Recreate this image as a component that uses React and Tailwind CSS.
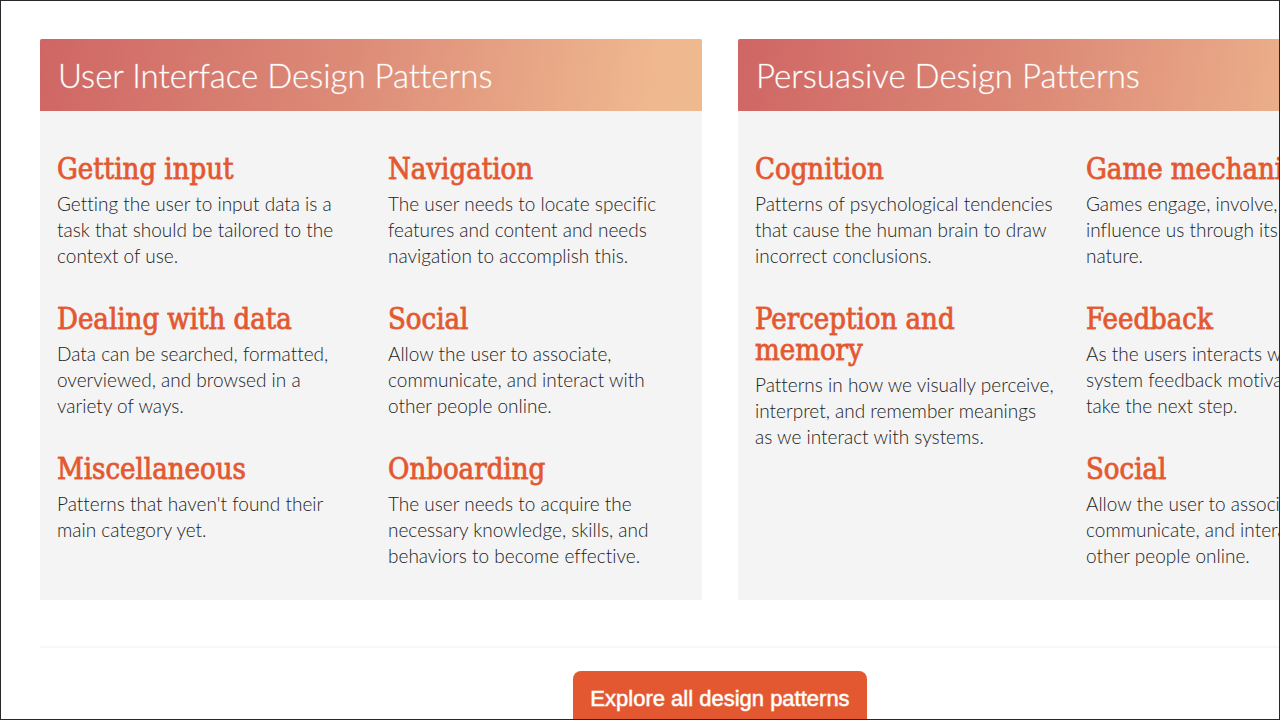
const groups = [
  {
    title: 'User Interface Design Patterns',
    columns: [
      [
        { name: 'Getting input', text: 'Getting the user to input data is a task that should be tailored to the context of use.' },
        { name: 'Dealing with data', text: 'Data can be searched, formatted, overviewed, and browsed in a variety of ways.' },
        { name: 'Miscellaneous', text: "Patterns that haven't found their main category yet." },
      ],
      [
        { name: 'Navigation', text: 'The user needs to locate specific features and content and needs navigation to accomplish this.' },
        { name: 'Social', text: 'Allow the user to associate, communicate, and interact with other people online.' },
        { name: 'Onboarding', text: 'The user needs to acquire the necessary knowledge, skills, and behaviors to become effective.' },
      ],
    ],
  },
  {
    title: 'Persuasive Design Patterns',
    columns: [
      [
        { name: 'Cognition', text: 'Patterns of psychological tendencies that cause the human brain to draw incorrect conclusions.' },
        { name: 'Perception and memory', text: 'Patterns in how we visually perceive, interpret, and remember meanings as we interact with systems.' },
      ],
      [
        { name: 'Game mechanics', text: 'Games engage, involve, and influence us through its playful nature.' },
        { name: 'Feedback', text: 'As the users interacts with the system feedback motivates them to take the next step.' },
        { name: 'Social', text: 'Allow the user to associate, communicate, and interact with other people online.' },
      ],
    ],
  },
];

function Category({ name, text }) {
  return (
    <article>
      <h3 className="mb-1.5 font-['Roboto_Slab','DejaVu_Serif_Condensed','DejaVu_Serif',serif] text-[29px] leading-[31px] text-[#e35830] [-webkit-text-stroke:1px_#e35830d0]">
        <a href="#">{name}</a>
      </h3>
      <p className="text-[19px] leading-[26px] text-[#222]">{text}</p>
    </article>
  );
}

function PatternCard({ title, columns }) {
  return (
    <section className="bg-[#f4f4f4]">
      <h2 className="rounded-t-xs bg-linear-[100deg,#cf6664,#dd8c78_48%,#efb88f_92%,#efba90] px-[18px] pt-[11px] pb-[11px] text-[33px] leading-[50px] text-white [-webkit-text-stroke:1px_#ffffff40]">
        {title}
      </h2>
      <div className="grid grid-cols-2 pt-[43px] pb-[31px]">
        {columns.map((categories, i) => (
          <div key={i} className="flex flex-col gap-[35px] pr-3.5 pl-[17px]">
            {categories.map((c) => (
              <Category key={c.name} {...c} />
            ))}
          </div>
        ))}
      </div>
    </section>
  );
}

export default function App() {
  return (
    <div className="h-screen overflow-hidden border border-[#29262c] bg-white font-[Lato,sans-serif] font-light [font-variant-ligatures:none]">
      <main className="min-w-[1438px] px-[39px] pt-[38px]">
        <div className="grid grid-cols-2 gap-9">
          {groups.map((g) => (
            <PatternCard key={g.title} {...g} />
          ))}
        </div>
        <hr className="mt-[46px] border-t-2 border-[#f7f7f7]" />
        <div className="flex justify-center pt-[23px] pb-10">
          <button
            type="button"
            className="rounded-lg bg-[#e35830] px-[17px] py-[13px] font-['Liberation_Sans',Arial,sans-serif] text-[22px] leading-[30px] font-normal text-white [-webkit-text-stroke:1px_#ffffff90]"
          >
            Explore all design patterns
          </button>
        </div>
      </main>
    </div>
  );
}
